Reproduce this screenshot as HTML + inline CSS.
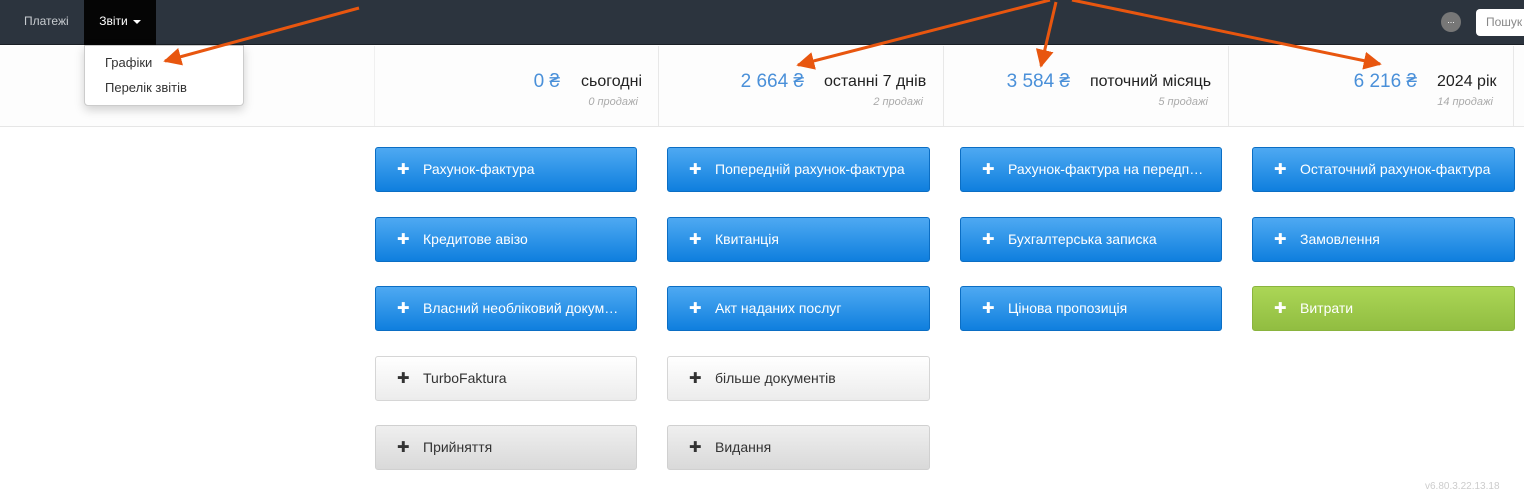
<!DOCTYPE html>
<html><head><meta charset="utf-8"><style>
*{box-sizing:border-box;margin:0;padding:0}
body{width:1524px;height:492px;overflow:hidden;background:#fff;font-family:"Liberation Sans",sans-serif;position:relative}
.nav{position:absolute;left:0;top:0;width:1524px;height:45px;background:#2c343e;border-bottom:1px solid #1a1f25}
.nav a{position:absolute;top:0;height:45px;line-height:42px;font-size:12px;color:#c8ccd0}
.zv{background:#050505;color:#fff!important;left:84px;width:72px;text-align:center}
.car{display:inline-block;border-left:4px solid transparent;border-right:4px solid transparent;border-top:4px solid #fff;vertical-align:middle;margin-left:5px}
.dots{position:absolute;left:1441px;top:12px;width:20px;height:20px;border-radius:50%;background:#777;color:#fff;font-size:9px;text-align:center;line-height:16px}
.search{position:absolute;left:1476px;top:9px;width:60px;height:27px;background:#fff;border-radius:4px;font-size:12px;color:#888;line-height:27px;padding-left:10px}
.stats{position:absolute;top:46px;left:0;width:1524px;height:81px;background:#fdfdfd;border-bottom:1px solid #e6e6e6}
.cell{position:absolute;top:0;height:80px;width:285px;border-right:1px solid #e8e8e8}
.amt{position:absolute;top:25px;font-size:19px;color:#4a90d9;text-align:right}
.lbl{position:absolute;top:27px;font-size:16px;color:#222}
.sub{position:absolute;top:50px;font-size:11px;font-style:italic;color:#aaa;text-align:right}
.dd{position:absolute;left:84px;top:45px;width:160px;height:61px;background:#fff;border:1px solid #ccc;border-radius:0 0 4px 4px;box-shadow:0 4px 10px rgba(0,0,0,.18)}
.dd div{position:absolute;left:20px;font-size:13px;color:#333}
.b{position:absolute;height:45px;border-radius:3px;font-size:14px;line-height:43px;padding-left:47px;white-space:nowrap;overflow:hidden}
.b:before{content:"✚";position:absolute;left:21px;font-size:15px}
.bl{background:linear-gradient(#4ea9f2,#0f7fde);border:1px solid #0b6ec4;color:#fff}
.gr{background:linear-gradient(#abd656,#91bd41);border:1px solid #8ab43e;color:#fff}
.wh{background:linear-gradient(#fff,#ececec);border:1px solid #d6d6d6;color:#333}
.gy{background:linear-gradient(#efefef,#d9d9d9);border:1px solid #d0d0d0;color:#333}
.ver{position:absolute;left:1425px;top:481px;font-size:10px;color:#ccc}
</style></head><body>
<div class="nav">
<a style="left:24px">Платежі</a>
<a class="zv">Звіти<span class="car"></span></a>
<div class="dots">...</div>
<div class="search">Пошук</div>
</div>
<div class="stats">
<div class="cell" style="left:374px;border-left:1px solid #f0f0f0"><div class="amt" style="right:98px">0 ₴</div><div class="lbl" style="left:206px">сьогодні</div><div class="sub" style="right:20px">0 продажі</div></div>
<div class="cell" style="left:659px"><div class="amt" style="right:139px">2 664 ₴</div><div class="lbl" style="left:165px">останні 7 днів</div><div class="sub" style="right:20px">2 продажі</div></div>
<div class="cell" style="left:944px"><div class="amt" style="right:158px">3 584 ₴</div><div class="lbl" style="left:146px">поточний місяць</div><div class="sub" style="right:20px">5 продажі</div></div>
<div class="cell" style="left:1229px"><div class="amt" style="right:96px">6 216 ₴</div><div class="lbl" style="left:208px">2024 рік</div><div class="sub" style="right:20px">14 продажі</div></div>
</div>
<div class="dd"><div style="top:9px">Графіки</div><div style="top:34px">Перелік звітів</div></div>

<div class="b bl" style="left:375px;top:147px;width:262px">Рахунок-фактура</div>
<div class="b bl" style="left:667px;top:147px;width:263px">Попередній рахунок-фактура</div>
<div class="b bl" style="left:960px;top:147px;width:262px">Рахунок-фактура на передп…</div>
<div class="b bl" style="left:1252px;top:147px;width:263px">Остаточний рахунок-фактура</div>
<div class="b bl" style="left:375px;top:217px;width:262px">Кредитове авізо</div>
<div class="b bl" style="left:667px;top:217px;width:263px">Квитанція</div>
<div class="b bl" style="left:960px;top:217px;width:262px">Бухгалтерська записка</div>
<div class="b bl" style="left:1252px;top:217px;width:263px">Замовлення</div>
<div class="b bl" style="left:375px;top:286px;width:262px">Власний необліковий докум…</div>
<div class="b bl" style="left:667px;top:286px;width:263px">Акт наданих послуг</div>
<div class="b bl" style="left:960px;top:286px;width:262px">Цінова пропозиція</div>
<div class="b gr" style="left:1252px;top:286px;width:263px">Витрати</div>
<div class="b wh" style="left:375px;top:356px;width:262px">TurboFaktura</div>
<div class="b wh" style="left:667px;top:356px;width:263px">більше документів</div>
<div class="b gy" style="left:375px;top:425px;width:262px">Прийняття</div>
<div class="b gy" style="left:667px;top:425px;width:263px">Видання</div>
<div class="ver">v6.80.3.22.13.18</div>

<svg style="position:absolute;left:0;top:0" width="1524" height="492">
<defs>
<marker id="a" viewBox="0 0 10 10" refX="9" refY="5" markerWidth="18" markerHeight="18" markerUnits="userSpaceOnUse" orient="auto"><path d="M0 0L10 5L0 10z" fill="#e8560f"/></marker></defs>
<g stroke="#e8560f" stroke-width="3" fill="none">
<line x1="359" y1="8" x2="165" y2="61" marker-end="url(#a)"/>
<line x1="1050" y1="0" x2="798" y2="65" marker-end="url(#a)"/>
<line x1="1056" y1="2" x2="1041" y2="66" marker-end="url(#a)"/>
<line x1="1072" y1="0" x2="1380" y2="64" marker-end="url(#a)"/>
</g></svg>
</body></html>
